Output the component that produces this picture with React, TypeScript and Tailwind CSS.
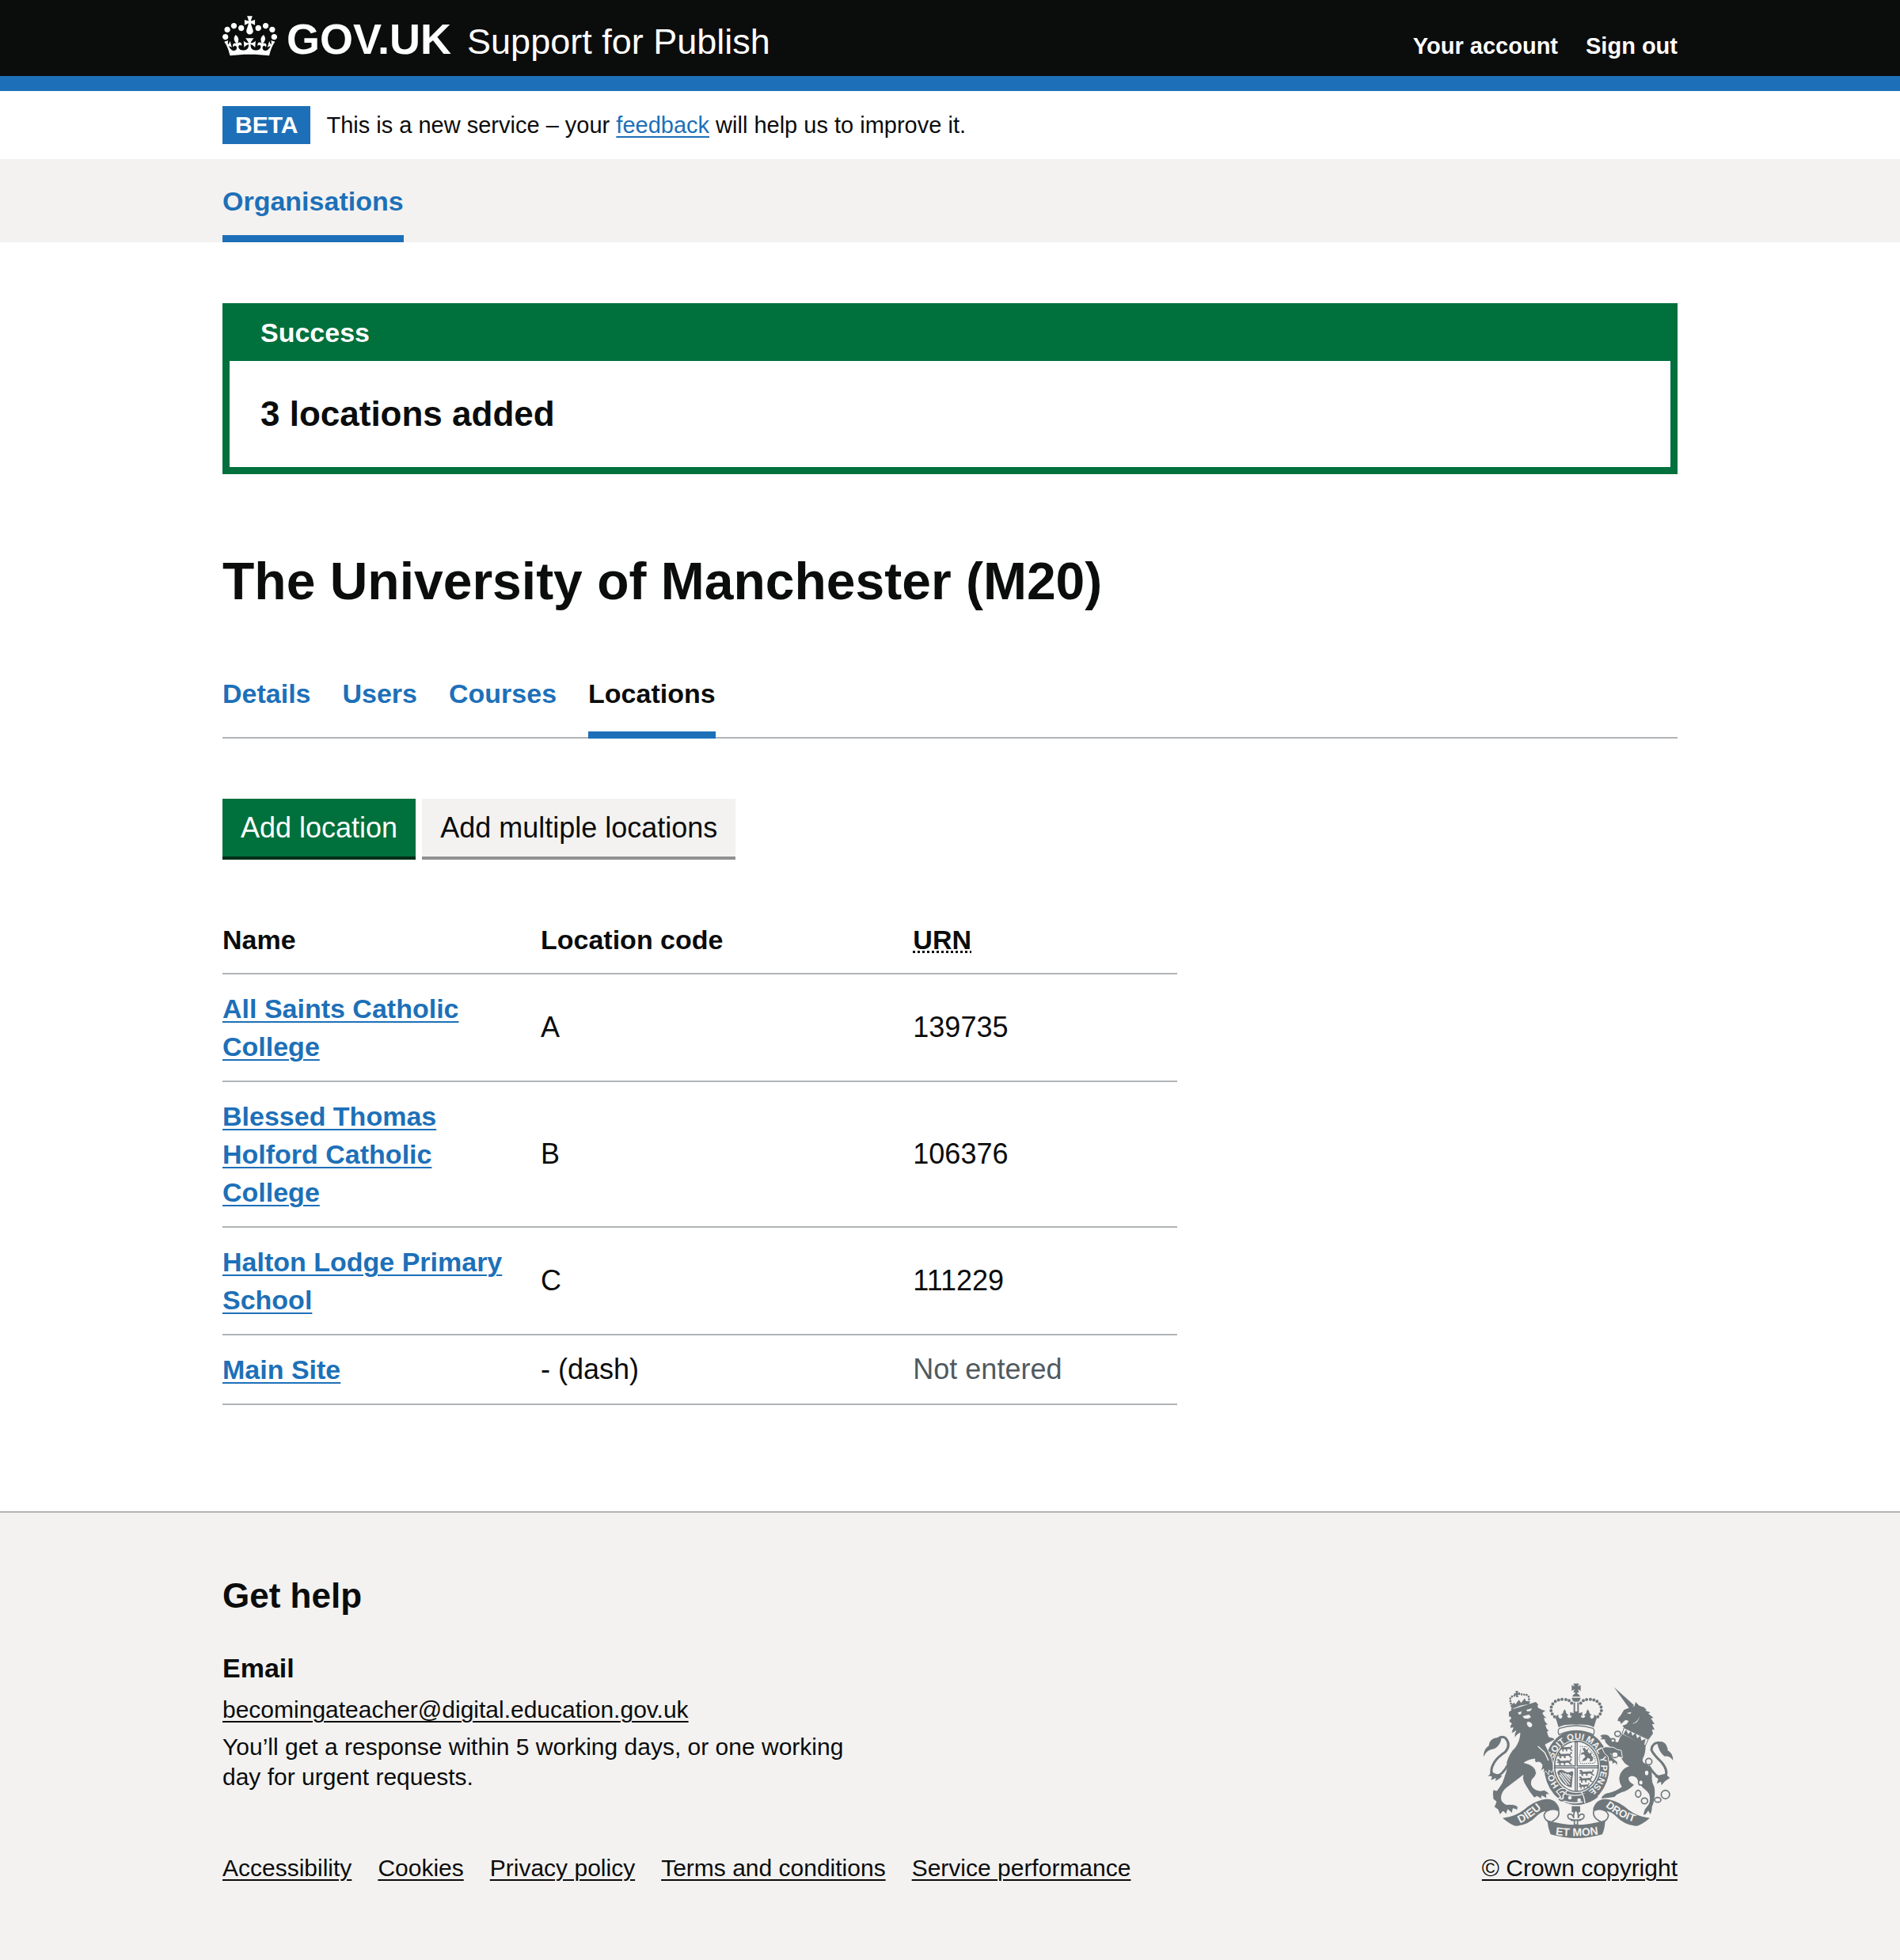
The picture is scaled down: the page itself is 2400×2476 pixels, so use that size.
import React from "react";

const container = "mx-auto w-full max-w-[1838px]";

const CROWN_PATH =
  "M25 30.2c3.5 1.5 7.7-.2 9.1-3.7 1.5-3.6-.2-7.8-3.9-9.2-3.6-1.4-7.6.3-9.1 3.9-1.4 3.5.3 7.5 3.9 9zM9 39.5c3.6 1.5 7.8-.2 9.2-3.7 1.5-3.6-.2-7.8-3.9-9.1-3.6-1.5-7.6.2-9.1 3.8-1.4 3.5.3 7.5 3.8 9zM4.4 57.2c3.5 1.5 7.7-.2 9.1-3.8 1.5-3.6-.2-7.7-3.9-9.1-3.5-1.5-7.6.3-9.1 3.8-1.4 3.5.3 7.6 3.9 9.1zm38.3-21.4c3.5 1.5 7.7-.2 9.1-3.8 1.5-3.6-.2-7.7-3.9-9.1-3.6-1.5-7.6.3-9.1 3.8-1.3 3.6.4 7.7 3.9 9.1zm64.4-5.6c-3.6 1.5-7.8-.2-9.1-3.7-1.5-3.6.2-7.8 3.8-9.2 3.6-1.4 7.7.3 9.2 3.9 1.3 3.5-.4 7.5-3.9 9zm15.9 9.3c-3.6 1.5-7.7-.2-9.1-3.7-1.5-3.6.2-7.8 3.7-9.1 3.6-1.5 7.7.2 9.2 3.8 1.5 3.5-.3 7.5-3.8 9zm4.7 17.7c-3.6 1.5-7.8-.2-9.2-3.8-1.5-3.6.2-7.7 3.9-9.1 3.6-1.5 7.7.3 9.2 3.8 1.3 3.5-.4 7.6-3.9 9.1zM89.3 35.8c-3.6 1.5-7.8-.2-9.2-3.8-1.4-3.6.2-7.7 3.9-9.1 3.6-1.5 7.7.3 9.2 3.8 1.4 3.6-.3 7.7-3.9 9.1zM69.7 17.7l8.9 4.7V9.3l-8.9 2.8c-.2-.3-.5-.6-.9-.9L72.4 0H59.6l3.5 11.2c-.3.3-.6.5-.9.9l-8.8-2.8v13.1l8.8-4.7c.3.3.6.7.9.9l-5 15.4v.1c-.2.8-.4 1.6-.4 2.4 0 4.1 3.1 7.5 7 8.1h.2c.3 0 .7.1 1 .1.4 0 .7 0 1-.1h.2c4-.6 7.1-4.1 7.1-8.1 0-.8-.1-1.7-.4-2.4V34l-5.1-15.4c.4-.2.7-.6 1-.9zM66 92.8c16.9 0 32.8 1.1 47.1 3.2 4-16.9 8.9-26.7 14-33.5l-9.6-3.4c1 4.9 1.1 7.2 0 10.2-1.5-1.4-3-4.3-4.2-8.7L108.6 76c2.8-2 5-3.2 7.5-3.3-4.4 9.4-10 11.9-13.6 11.2-4.3-.8-6.3-4.6-5.6-7.9 1-4.7 5.7-5.9 8-.5 4.3-8.7-3-11.4-7.6-8.8 7.1-7.2 7.9-13.5 2.1-21.1-8 6.1-8.1 12.3-4.5 20.8-4.7-5.4-12.1-2.5-9.5 6.2 3.4-5.2 7.9-2 7.2 3.1-.6 4.3-6.4 7.8-13.5 7.2-10.3-.9-10.9-8-11.2-13.8 2.5-.5 7.1 1.8 11 7.3L80.2 60c-4.1 4.4-8 5.3-12.3 5.4 1.4-4.4 8-11.6 8-11.6H55.5s6.4 7.2 7.9 11.6c-4.2-.1-8-1-12.3-5.4l1.4 16.4c3.9-5.5 8.5-7.7 10.9-7.3-.3 5.8-.9 12.8-11.1 13.8-7.2.6-12.9-2.9-13.5-7.2-.7-5 3.8-8.3 7.1-3.1 2.7-8.7-4.6-11.6-9.4-6.2 3.7-8.5 3.6-14.7-4.6-20.8-5.8 7.6-5 13.9 2.2 21.1-4.7-2.6-11.9.1-7.7 8.8 2.3-5.5 7.1-4.2 8.1.5.7 3.3-1.3 7.1-5.7 7.9-3.5.7-9-1.8-13.5-11.2 2.5.1 4.7 1.3 7.5 3.3l-4.7-15.4c-1.2 4.4-2.7 7.2-4.3 8.7-1.1-3-.9-5.3 0-10.2l-9.5 3.4c5 6.9 9.9 16.7 14 33.5 14.8-2.1 30.8-3.2 47.7-3.2z";

function Crown() {
  return (
    <svg viewBox="0 0 132 97" className="h-[51px] w-[69px] shrink-0" fill="currentColor" aria-hidden="true">
      <path d={CROWN_PATH} />
    </svg>
  );
}

const PALE = "#f3f2f1";

/* Passant lion used in the shield quarters, drawn in a 70 by 26 box. */
const PASSANT =
  "M0 6L7 1L13 4L16 9L40 8Q48 5 52 9L57 4L54 0L62 1L61 7L55 13L58 19L64 21L62 25L53 22L49 16L38 16L34 21L38 25L29 25L29 18L20 17L16 21L20 26L10 25L11 17L4 18L1 14L8 12L6 8Z";

const MOTTO: [string, number][] = [
  ["HO", 102],
  ["SOIT", 224],
  ["QUI", 303],
  ["MAL", 377],
  ["Y", 436],
  ["PENSE", 512],
];

function HalfCrown() {
  return (
    <g>
      <path
        d="M322 186Q293 168 298 144Q306 112 346 112Q370 113 378 130"
        fill="none"
        stroke="currentColor"
        strokeWidth="12"
        strokeLinecap="round"
        strokeDasharray="0 13.5"
      />
      <path d="M393 208Q345 206 326 218L316 184Q314 174 326 170Q322 182 334 186Q342 182 340 174L334 170Q344 168 344 158L349 150L354 158Q354 168 364 170L358 176Q362 184 370 182Q376 180 377 172L370 176L370 160L384 166Q386 160 382 158L393 158Z" />
    </g>
  );
}

function Ribbon() {
  return (
    <g>
      <path d="M114 562Q160 558 196 530Q226 502 262 493Q302 484 320 508Q332 526 328 534Q306 524 286 536Q264 534 246 552Q210 590 168 592Q150 592 114 562Z" />
      <path
        d="M284 534Q262 548 278 568L290 578M300 576Q334 560 326 534Q304 524 284 534"
        fill="none"
        stroke="currentColor"
        strokeWidth="5"
      />
    </g>
  );
}

function Crest() {
  return (
    <svg
      viewBox="42 50 720 591"
      className="h-[197px] w-[240px] text-[#6f777b]"
      fill="currentColor"
      role="img"
      aria-label="Royal coat of arms"
      fontFamily='"Liberation Sans", Arial, sans-serif'
      fontWeight="bold"
    >
      <defs>
        <path id="garter" d="M395 472A92 104 0 0 1 395 264A92 104 0 0 1 395 472" />
        <path id="dieu" d="M180 582Q222 564 278 510" />
        <path id="droit" d="M503 518Q562 566 632 582" />
        <path id="mon" d="M302 624Q393 638 490 622" />
      </defs>

      {/* royal crown */}
      <path d="M382 52L404 52L399 63L410 58L410 80L399 74L404 86L382 86L387 74L376 80L376 58L387 63Z" />
      <path d="M389 84H397V90Q406 94 408 102H378Q380 94 389 90Z" />
      <path d="M376 106H410Q408 118 400 121H386Q378 118 376 106Z" />
      <path d="M386 124V160M400 124V160" stroke="currentColor" strokeWidth="6" />
      <HalfCrown />
      <g transform="translate(786 0) scale(-1 1)">
        <HalfCrown />
      </g>
      <path d="M377 163L409 163L400 174L411 170V188L400 181L393 190L386 181L375 188V170L386 174Z" />

      {/* garter and shield */}
      <ellipse cx="395" cy="370" rx="123" ry="142" />
      <path
        d="M330 222Q393 202 456 222Q466 230 458 246Q393 216 328 246Q320 230 330 222Z"
        fill={PALE}
        stroke="currentColor"
        strokeWidth="4"
      />
      <ellipse cx="394" cy="366" rx="89" ry="101" fill={PALE} />
      <ellipse cx="394" cy="366" rx="83" ry="95" fill="none" stroke="currentColor" strokeWidth="5" />
      <path d="M393 272V461M311 368H477" stroke="currentColor" strokeWidth="12" />
      <path d="M393 276V458M315 368H473" stroke={PALE} strokeWidth="3" />
      <path d={PASSANT} transform="translate(332 286) scale(.75 .9)" />
      <path d={PASSANT} transform="translate(320 311) scale(.92 .95)" />
      <path d={PASSANT} transform="translate(318 337) scale(.94 .95)" />
      <path d={PASSANT} transform="translate(403 378) scale(.92 .95)" />
      <path d={PASSANT} transform="translate(402 403) scale(.84 .95)" />
      <path d={PASSANT} transform="translate(402 428) scale(.66 .9)" />
      {/* rampant lion */}
      <path
        d="M407 290L434 292L458 318L466 346L462 354L410 356L404 340L410 300"
        fill="none"
        stroke="currentColor"
        strokeWidth="3"
        strokeDasharray="5 3"
      />
      <path d="M416 298L426 296L430 304L440 300L436 310L444 318L452 312L450 324L458 334L454 346L444 348L446 338L436 334L430 344L414 346L420 338L428 330L422 320L410 322L414 314L424 312Z" />
      {/* harp */}
      <path d="M322 386Q334 374 348 384Q360 394 378 384L382 390Q378 410 376 446Q340 442 322 392Z" />
      <path d="M332 390L368 436M341 390L370 424M350 393L372 414M360 396L374 406M330 398L358 436" stroke={PALE} strokeWidth="4" />

      <g fill={PALE} fontSize="34" textAnchor="middle">
        {MOTTO.map(([word, offset]) => (
          <text key={word}>
            <textPath href="#garter" startOffset={offset}>
              {word}
            </textPath>
          </text>
        ))}
      </g>

      {/* garter buckle */}
      <path d="M318 462Q340 440 360 456Q350 462 356 472Q392 482 424 470L420 500Q380 510 350 498Q334 508 322 490L334 482Q326 470 318 462Z" stroke={PALE} strokeWidth="4" />
      <path d="M330 466Q346 456 350 470Q340 474 344 486Q336 494 330 486" fill="none" stroke={PALE} strokeWidth="5" />
      <circle cx="369" cy="485" r="7" fill={PALE} />
      <circle cx="404" cy="494" r="7" fill={PALE} />
      <path d="M414 472Q440 462 458 470L476 482Q450 504 418 508Z" />
      <path d="M412 462Q424 480 426 506" fill="none" stroke={PALE} strokeWidth="4" />

      {/* lion supporter */}
      <path
        d="M152 158L228 132L232 124L247 126L248 142Q266 154 280 154L266 164Q272 178 284 184L272 184Q274 200 288 208L278 210Q280 226 292 232L284 234Q286 248 290 254Q306 256 314 264L276 284Q290 312 300 336Q308 360 306 376L300 390L290 380L288 398L278 384L268 392L270 376L258 384L264 364Q262 350 248 350L240 352Q234 346 236 338Q214 340 196 352Q240 362 242 392Q240 404 226 416Q216 442 240 454Q256 462 272 456Q288 462 292 474L280 472L282 488L262 478L262 490L244 480L234 486Q214 462 202 440Q186 416 192 400Q160 424 124 452Q104 474 112 498Q124 514 140 510Q164 510 172 520L170 532L154 526L150 544L134 530L128 548L116 536L104 550L96 530L82 520L90 500L78 490L76 470L78 454L92 458Q116 430 122 400Q134 370 128 352Q138 316 160 296Q178 272 180 240Q168 244 160 260Q156 244 164 232L150 242Q146 232 154 220L142 222Q140 212 148 204L138 196Q138 188 146 184L140 174Z"
        stroke={PALE}
        strokeWidth="3"
      />
      <path d="M138 178L138 160L152 150L240 122L248 132L246 144Z" />
      <path d="M172 162L186 158L184 168L176 170ZM204 152L226 146L220 156L208 158ZM190 176L214 170L222 180L210 186L196 184Z" fill={PALE} />
      <path d="M206 200Q216 192 226 206Q228 218 216 218Q206 214 206 200Z" fill={PALE} />
      <path d="M248 290L274 314L288 344" fill="none" stroke={PALE} strokeWidth="4" />
      <path
        d="M150 148L142 112Q146 98 164 98Q176 84 190 96Q206 90 214 104L214 132"
        fill="none"
        stroke="currentColor"
        strokeWidth="8"
        strokeLinecap="round"
        strokeDasharray="0 10"
      />
      <path d="M152 148L148 132L158 124L162 132L176 114L184 126L198 108L202 118L214 120L216 130Q182 132 152 148Z" />
      <path d="M163 80H173L171 88L180 86V96L171 94L174 104H166L164 96L158 98V88L165 90Z" />
      <path d="M134 360Q108 410 80 400Q62 386 82 352Q96 330 124 312Q148 284 124 258Q108 250 96 262" fill="none" stroke="currentColor" strokeWidth="9" />
      <path d="M42 330Q40 304 62 288Q64 254 110 256Q108 286 82 300Q54 302 42 330ZM68 386Q68 400 56 402L74 404L70 418L90 410L86 422Q104 414 112 402L92 396Z" />

      {/* unicorn supporter */}
      <path d="M536 66L612 134L598 152Z" />
      <path d="M552 184L562 172L574 152L598 142L614 138L618 122L632 136L650 142L660 152L654 154L674 162L666 166L686 182L676 184L690 206L680 206L690 228L680 226L684 242L668 264L576 222L568 212L584 206L592 194L580 190L562 206L560 196L550 194Z" />
      <path d="M584 164L602 160L598 168ZM634 176Q624 200 606 204Q626 206 634 176Z" fill={PALE} />
      <path d="M574 220L666 264L654 290L566 246Z" fill={PALE} stroke="currentColor" strokeWidth="3" />
      <path d="M572 244L582 226L590 244L600 232L606 250L618 240L624 260L636 250L640 268L656 262L650 286Z" />
      <path d="M568 244L656 286Q656 316 646 336Q640 350 656 356Q680 368 680 404Q678 424 688 442Q692 452 690 480Q688 504 680 520Q680 536 674 548L666 534L656 548L648 550Q650 530 662 518Q674 506 672 484Q672 468 654 454Q634 440 622 410Q606 396 592 408Q588 424 612 436Q590 458 566 464Q548 470 538 482L488 488Q492 474 510 468Q540 464 566 444Q550 420 560 394Q572 372 594 366Q572 356 562 330L550 306Q522 296 510 282Q500 272 502 264L484 264L492 258L484 250Q500 242 516 250Q524 262 534 270Q544 276 552 274Q556 256 568 244Z" />
      <path d="M564 306Q546 304 534 294L504 292Q492 294 492 300Q496 316 514 330L516 348L528 346L530 358L540 352L548 364L550 352Q546 344 540 342Q528 334 524 318Q540 328 568 334Z" stroke={PALE} strokeWidth="3" />
      <path d="M668 364Q700 420 730 406Q744 384 716 350Q686 322 678 304Q680 276 708 276" fill="none" stroke="currentColor" strokeWidth="9" />
      <path d="M700 278Q712 268 722 274Q738 280 740 306Q760 316 760 344Q748 326 728 328Q706 312 700 278ZM690 404L704 414L698 432L714 424L716 438L730 422L748 410L730 394Z" />
      <g fill={PALE} stroke="currentColor" strokeWidth="5">
        <ellipse cx="550" cy="243" rx="11" ry="10" />
        <ellipse cx="532" cy="268" rx="8" ry="7" />
        <ellipse cx="540" cy="322" rx="12" ry="11" />
        <ellipse cx="668" cy="348" rx="12" ry="12" />
        <ellipse cx="660" cy="391" rx="9" ry="11" />
        <ellipse cx="638" cy="427" rx="9" ry="10" />
        <ellipse cx="628" cy="470" rx="10" ry="13" />
        <ellipse cx="652" cy="497" rx="12" ry="11" />
        <ellipse cx="702" cy="493" rx="12" ry="9" />
      </g>
      <circle cx="731" cy="473" r="16" fill="none" stroke="currentColor" strokeWidth="5" />

      {/* motto ribbon */}
      <Ribbon />
      <g transform="translate(786 0) scale(-1 1)">
        <Ribbon />
      </g>
      <path d="M283 570Q392 606 503 570Q502 600 492 624Q393 652 296 624Q286 600 283 570Z" />
      <g fill={PALE}>
        <text fontSize="42">
          <textPath href="#dieu">DIEU</textPath>
        </text>
        <text fontSize="40">
          <textPath href="#droit">DROIT</textPath>
        </text>
        <text fontSize="42" textAnchor="middle">
          <textPath href="#mon" startOffset="50%">
            ET MON
          </textPath>
        </text>
      </g>

      {/* fleur-de-lis */}
      <path d="M376 517H408V540H376Z" />
      <path
        d="M392 530Q404 544 400 562Q408 540 422 550Q426 566 408 568L398 572V588H386V572L376 568Q358 566 362 550Q376 540 384 562Q380 544 392 530Z"
        fill={PALE}
        stroke="currentColor"
        strokeWidth="5"
      />
      <path d="M372 570H412" stroke="currentColor" strokeWidth="6" />
    </svg>
  );
}

const tabs = ["Details", "Users", "Courses", "Locations"];

const locations = [
  { name: "All Saints Catholic College", code: "A", urn: "139735" },
  { name: "Blessed Thomas Holford Catholic College", code: "B", urn: "106376" },
  { name: "Halton Lodge Primary School", code: "C", urn: "111229" },
  { name: "Main Site", code: "- (dash)", urn: null },
];

const footerLinks = ["Accessibility", "Cookies", "Privacy policy", "Terms and conditions", "Service performance"];

const underlined = "underline decoration-2 underline-offset-4";

export default function App() {
  return (
    <div className="min-h-screen bg-[#f3f2f1] font-['Liberation_Sans',Arial,sans-serif] text-[36px] leading-[48px] text-[#0b0c0c]">
      <header className="border-b-[19px] border-[#1d70b8] bg-[#0b0c0c] text-white">
        <div className={`${container} flex items-end justify-between pt-5 pb-[25px]`}>
          <a href="#" className="flex items-end">
            <Crown />
            <span className="ml-3 text-[54px] leading-[44px] font-bold">GOV.UK</span>
            <span className="ml-5 text-[45px] leading-[36px]">Support for Publish</span>
          </a>
          <nav aria-label="Account" className="flex gap-[35px] text-[29px] leading-[26px] font-bold">
            <a href="#">Your account</a>
            <a href="#">Sign out</a>
          </nav>
        </div>
      </header>

      <div className="bg-white">
        <div className={`${container} flex items-center py-[19px] text-[29px]`}>
          <strong className="bg-[#1d70b8] px-4 text-[30px] text-white">BETA</strong>
          <p className="ml-5">
            This is a new service – your{" "}
            <a href="#" className={`${underlined} text-[#1d70b8]`}>
              feedback
            </a>{" "}
            will help us to improve it.
          </p>
        </div>
      </div>

      <nav aria-label="Primary" className="bg-[#f3f2f1]">
        <div className={`${container} flex`}>
          <a href="#" className="border-b-[9px] border-[#1d70b8] pt-[29px] pb-[19px] text-[34px] font-bold text-[#1d70b8]">
            Organisations
          </a>
        </div>
      </nav>

      <main className="bg-white pt-[77px] pb-[134px]">
        <div className={container}>
          <section aria-labelledby="banner-title" className="border-[9px] border-t-0 border-[#00703c]">
            <h2 id="banner-title" className="bg-[#00703c] px-[39px] pt-[13px] pb-3 text-[34px] font-bold text-white">
              Success
            </h2>
            <p className="px-[39px] py-[38px] text-[44px] leading-[58px] font-bold">3 locations added</p>
          </section>

          <h1 className="mt-[97px] text-[66px] leading-[76px] font-bold">The University of Manchester (M20)</h1>

          <nav aria-label="Organisation" className="mt-20 flex gap-10 border-b-2 border-[#b1b4b6] text-[34px] font-bold">
            {tabs.map((tab) =>
              tab === "Locations" ? (
                <a key={tab} href="#" aria-current="page" className="-mb-0.5 border-b-[9px] border-[#1d70b8] pb-6">
                  {tab}
                </a>
              ) : (
                <a key={tab} href="#" className="text-[#1d70b8]">
                  {tab}
                </a>
              ),
            )}
          </nav>

          <div className="mt-[76px] flex gap-2">
            <button type="button" className="border-b-4 border-[#002d18] bg-[#00703c] px-[23px] pt-[13px] pb-3 text-white">
              Add location
            </button>
            <button type="button" className="border-b-4 border-[#929191] bg-[#f3f2f1] px-[23px] pt-[13px] pb-3">
              Add multiple locations
            </button>
          </div>

          <table className="mt-[58px] w-full max-w-[1206px] table-fixed border-collapse text-left">
            <thead className="text-[34px]">
              <tr className="border-b-2 border-[#b1b4b6]">
                <th scope="col" className="w-1/3 pt-[19px] pr-9 pb-[18px]">Name</th>
                <th scope="col" className="w-[39%] pt-[19px] pb-[18px]">Location code</th>
                <th scope="col" className="pt-[19px] pb-[18px]">
                  <abbr title="Unique reference number" className="underline decoration-dotted decoration-[3px] underline-offset-2">
                    URN
                  </abbr>
                </th>
              </tr>
            </thead>
            <tbody>
              {locations.map((location) => (
                <tr key={location.name} className="border-b-2 border-[#b1b4b6]">
                  <th scope="row" className="py-[19px] pr-9 text-[34px]">
                    <a href="#" className={`${underlined} text-[#1d70b8]`}>
                      {location.name}
                    </a>
                  </th>
                  <td className="py-[19px]">{location.code}</td>
                  <td className="py-[19px]">
                    {location.urn ?? <span className="text-[#505a5f]">Not entered</span>}
                  </td>
                </tr>
              ))}
            </tbody>
          </table>
        </div>
      </main>

      <footer className="border-t-2 border-[#b1b4b6] pt-[76px] pb-24 text-[30px] leading-[38px]">
        <div className={`${container} flex items-end justify-between`}>
          <div>
            <h2 className="text-[44px] leading-[58px] font-bold">Get help</h2>
            <h3 className="mt-[38px] text-[34px] leading-[48px] font-bold">Email</h3>
            <p className="mt-2.5">
              <a href="#" className={underlined}>
                becomingateacher@digital.education.gov.uk
              </a>
            </p>
            <p className="mt-[9px] max-w-[820px]">
              You’ll get a response within 5 working days, or one working day for urgent requests.
            </p>
            <ul className="mt-[77px] flex flex-wrap gap-x-[33px]">
              {footerLinks.map((label) => (
                <li key={label}>
                  <a href="#" className={underlined}>
                    {label}
                  </a>
                </li>
              ))}
            </ul>
          </div>
          <div className="flex shrink-0 flex-col items-end">
            <div className="mr-[5px] mb-[18px]">
              <Crest />
            </div>
            <a href="#" className={underlined}>
              © Crown copyright
            </a>
          </div>
        </div>
      </footer>
    </div>
  );
}
